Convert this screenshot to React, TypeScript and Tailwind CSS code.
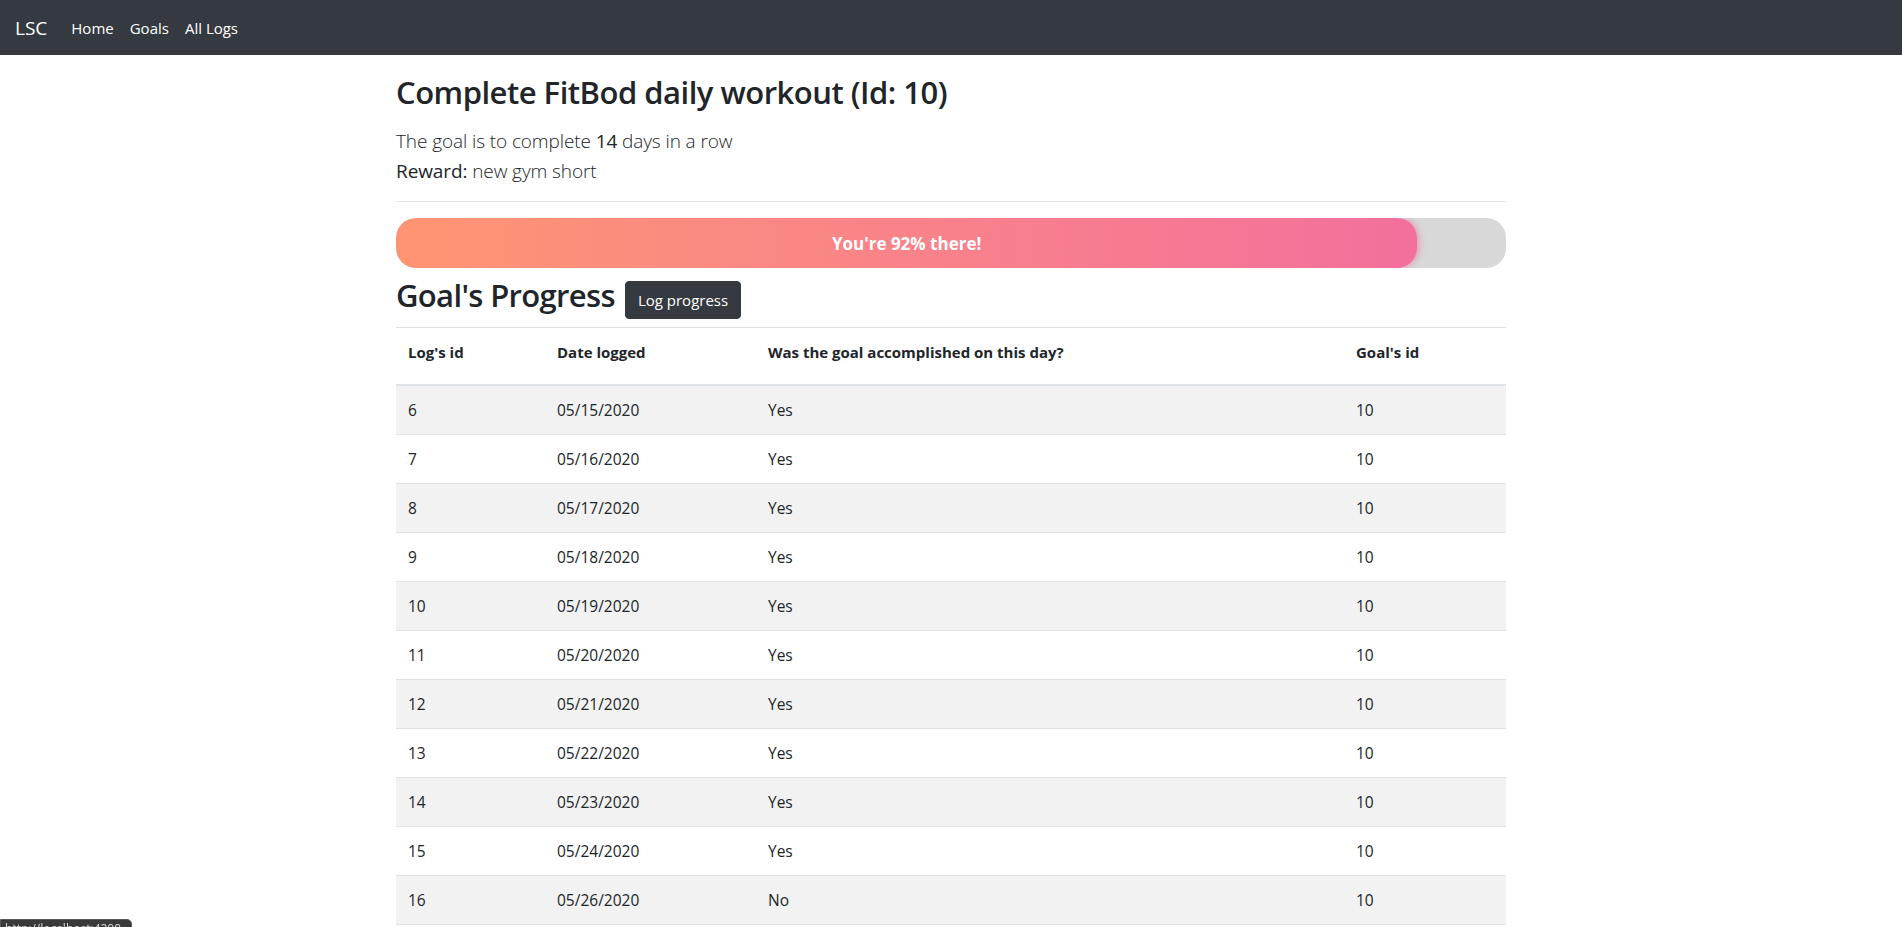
import React from "react";

const logs = [
  { id: 6, date: "05/15/2020", done: "Yes", goal: 10 },
  { id: 7, date: "05/16/2020", done: "Yes", goal: 10 },
  { id: 8, date: "05/17/2020", done: "Yes", goal: 10 },
  { id: 9, date: "05/18/2020", done: "Yes", goal: 10 },
  { id: 10, date: "05/19/2020", done: "Yes", goal: 10 },
  { id: 11, date: "05/20/2020", done: "Yes", goal: 10 },
  { id: 12, date: "05/21/2020", done: "Yes", goal: 10 },
  { id: 13, date: "05/22/2020", done: "Yes", goal: 10 },
  { id: 14, date: "05/23/2020", done: "Yes", goal: 10 },
  { id: 15, date: "05/24/2020", done: "Yes", goal: 10 },
  { id: 16, date: "05/26/2020", done: "No", goal: 10 },
  { id: 17, date: "05/27/2020", done: "Yes", goal: 10 },
];

function Navbar() {
  return (
    <nav className="h-[55px] bg-[#343a40] flex items-center pl-[15px] pr-4">
      <a className="text-[19px] text-white mr-4 leading-[30px]">LSC</a>
      <div className="flex items-center">
        <a className="px-2 text-[15px] text-white leading-6">Home</a>
        <a className="px-2 text-[15px] text-white leading-6">Goals</a>
        <a className="px-2 text-[15px] text-white leading-6">All Logs</a>
      </div>
    </nav>
  );
}

function ProgressBar({ percent }: { percent: number }) {
  return (
    <div className="mt-[16px] h-[50px] w-full rounded-[20px] bg-[#d8d8d8] flex overflow-hidden">
      <div
        className="h-full rounded-[20px] bg-gradient-to-r from-[#ff9472] to-[#f2709c] shadow-[2px_0_6px_rgba(242,112,156,0.6)] flex items-center justify-center"
        style={{ width: `${percent}%` }}
      >
        <span className="text-white font-bold text-[17px] translate-y-[1px]">You're {percent}% there!</span>
      </div>
    </div>
  );
}

export default function App() {
  return (
    <div className="min-h-screen bg-white font-['Open_Sans',sans-serif] text-[#212529]">
      <Navbar />
      <div className="mx-auto w-[1110px]">
        <h2 className="mt-[18px] mb-[15px] text-[31px] font-semibold leading-[38px] tracking-[-0.5px]">
          Complete FitBod daily workout (Id: 10)
        </h2>
        <p className="text-[19px] font-light leading-[30px] tracking-[-0.1px]">
          The goal is to complete <span className="font-normal">14</span> days in a row
        </p>
        <p className="text-[19px] font-light leading-[30px] tracking-[-0.1px]">
          <span className="font-normal">Reward:</span> new gym short
        </p>
        <hr className="mt-[15px] border-t border-[#e6e6e6]" />

        <ProgressBar percent={92} />

        <div className="mt-[8px] flex items-start gap-[10px]">
          <h2 className="text-[31px] font-semibold leading-[38px] tracking-[-0.65px]">Goal's Progress</h2>
          <button className="mt-[5px] bg-[#343a40] text-white text-[15px] leading-6 px-3 py-[6px] rounded-[4px] border border-[#343a40]">
            Log progress
          </button>
        </div>

        <table className="mt-[8px] w-full table-fixed border-collapse text-[15.5px] leading-6">
          <colgroup>
            <col className="w-[149px]" />
            <col className="w-[211px]" />
            <col className="w-[588px]" />
            <col className="w-[162px]" />
          </colgroup>
          <thead>
            <tr className="text-[15px]">
              <th className="text-left font-bold px-3 pt-3 pb-[20px] border-t border-[#dee2e6] border-b-2">Log's id</th>
              <th className="text-left font-bold px-3 pt-3 pb-[20px] border-t border-[#dee2e6] border-b-2">Date logged</th>
              <th className="text-left font-bold px-3 pt-3 pb-[20px] border-t border-[#dee2e6] border-b-2">Was the goal accomplished on this day?</th>
              <th className="text-left font-bold px-3 pt-3 pb-[20px] border-t border-[#dee2e6] border-b-2">Goal's id</th>
            </tr>
          </thead>
          <tbody>
            {logs.map((log, i) => (
              <tr key={log.id} className={i % 2 === 0 ? "bg-[#f2f2f2]" : "bg-white"}>
                <td className="px-3 py-3 border-t border-[#dee2e6]">{log.id}</td>
                <td className="px-3 py-3 border-t border-[#dee2e6]">{log.date}</td>
                <td className="px-3 py-3 border-t border-[#dee2e6]">{log.done}</td>
                <td className="px-3 py-3 border-t border-[#dee2e6]">{log.goal}</td>
              </tr>
            ))}
          </tbody>
        </table>
      </div>

      <div className="fixed left-0 top-[919px] w-[132px] h-[22px] rounded-tr-[5px] bg-[#3a3a3a] border border-[#5a5a5a] px-1 text-[12px] leading-[18px] text-[#dddddd] overflow-hidden whitespace-nowrap">
        http://localhost:4200
      </div>
    </div>
  );
}
